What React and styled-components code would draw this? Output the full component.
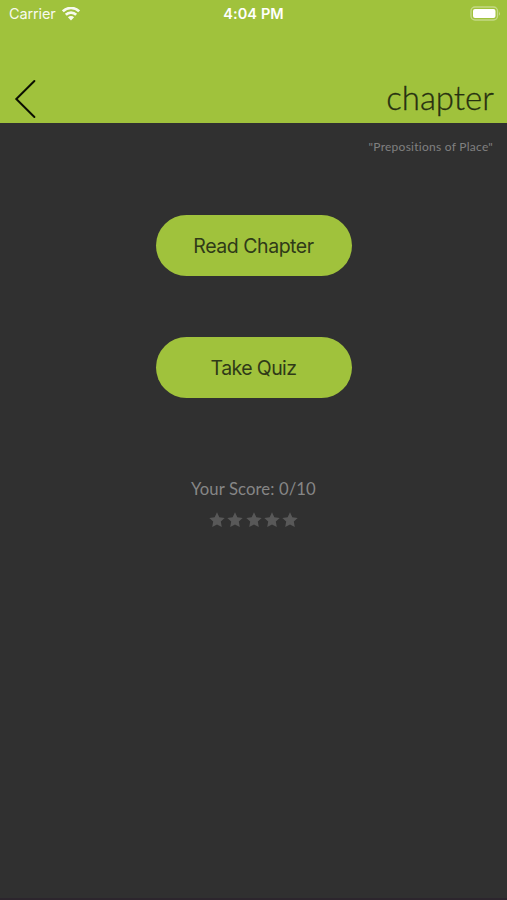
import React from 'react'
import styled, { createGlobalStyle } from 'styled-components'

const GlobalStyle = createGlobalStyle`
    * {
        box-sizing: border-box;
    }
    body {
        margin: 0;
        background: #303030;
    }
`;

function StatusBar() {
    return (
        <StatusBarStyled>
            <div className='carrier'>
                <span>Carrier</span>
                <svg width='18' height='14' viewBox='0 0 18 14' fill='none' stroke='#fff' strokeWidth='2.7'>
                    <path d='M0.8 4.4 A11.6 11.6 0 0 1 17.2 4.4' />
                    <path d='M3.8 7.8 A7.4 7.4 0 0 1 14.2 7.8' />
                    <path d='M9 13.4 L5.9 10.3 A4.4 4.4 0 0 1 12.1 10.3 Z' fill='#fff' stroke='none' />
                </svg>
            </div>
            <time>4:04 PM</time>
            <svg className='battery' width='31' height='15' viewBox='0 0 31 15'>
                <rect x='1' y='1' width='26.5' height='13' rx='4' fill='none' stroke='#fff' strokeOpacity='0.38' strokeWidth='1.4' />
                <rect x='3' y='3' width='22.5' height='9' rx='2' fill='#fff' />
                <path d='M29 5.2 Q30.7 7.5 29 9.8 Z' fill='#fff' fillOpacity='0.45' />
            </svg>
        </StatusBarStyled>
    )
}

function App() {
    return (
        <>
            <GlobalStyle />
            <Screen>
                <Header>
                    <StatusBar />
                    <NavRow>
                        <BackButton aria-label='Back'>
                            <svg width='22' height='40' viewBox='0 0 22 40' fill='none' stroke='#0c1002' strokeWidth='2'>
                                <path d='M20.4 2 L2.3 20 L20.4 38' strokeLinecap='round' />
                            </svg>
                        </BackButton>
                        <Title>chapter</Title>
                    </NavRow>
                </Header>
                <Subtitle>"Prepositions of Place"</Subtitle>
                <Actions>
                    <ActionButton $spacing='-0.45px'>Read Chapter</ActionButton>
                    <ActionButton $spacing='-0.6px'>Take Quiz</ActionButton>
                </Actions>
                <Score>Your Score: 0/10</Score>
                <Stars>
                    {[1, 2, 3, 4, 5].map(star => (
                        <svg key={star} width='16' height='16' viewBox='0 0 16 16' fill='#585858'>
                            <path d='M8 0.3 L10.3 5.2 L15.7 5.9 L11.8 9.6 L12.8 15 L8 12.4 L3.2 15 L4.2 9.6 L0.3 5.9 L5.7 5.2 Z' />
                        </svg>
                    ))}
                </Stars>
            </Screen>
        </>
    )
}

const Screen = styled.main`
    display: flex;
    flex-direction: column;
    width: 507px;
    height: 900px;
    overflow: hidden;
    background: #303030;
    border-bottom: 2px solid #2c252d;
    font-family: Lato, sans-serif;
    font-variant-ligatures: none;
`;

const Header = styled.header`
    height: 123px;
    flex-shrink: 0;
    background: #a0c23c;
`;

const StatusBarStyled = styled.div`
    display: grid;
    grid-template-columns: 1fr auto 1fr;
    align-items: center;
    height: 27px;
    padding: 0 6px 0 9px;
    color: #fff;
    font-family: Inter, sans-serif;
    font-size: 14.5px;
    .carrier {
        display: flex;
        align-items: center;
        gap: 6px;
        opacity: 0.92;
        letter-spacing: -0.12px;
    }
    time {
        margin-right: 3px;
        font-weight: 600;
        letter-spacing: 0.12px;
    }
    .battery {
        justify-self: end;
    }
`;

const NavRow = styled.div`
    display: flex;
    justify-content: space-between;
    align-items: center;
    height: 96px;
    padding: 47px 13px 0 14px;
`;

const BackButton = styled.button`
    display: flex;
    padding: 0;
    border: 0;
    background: none;
`;

const Title = styled.h1`
    margin: -3px 0 0;
    color: #263010;
    font-size: 33px;
    font-weight: 300;
    line-height: 40px;
    -webkit-text-stroke: 0.3px #263010;
`;

const Subtitle = styled.p`
    margin: 15px 14px 0 0;
    color: #808080;
    font-size: 12px;
    line-height: 18px;
    letter-spacing: 0.26px;
    text-align: right;
`;

const Actions = styled.div`
    display: flex;
    flex-direction: column;
    align-items: center;
    gap: 61px;
    margin-top: 58.5px;
`;

const ActionButton = styled.button`
    width: 196px;
    height: 61px;
    padding: 1px 0 0;
    border: 0;
    border-radius: 31px;
    background: #a0c23c;
    color: #2f3a18;
    font-family: Inter, sans-serif;
    font-size: 19.5px;
    letter-spacing: ${props => props.$spacing};
`;

const Score = styled.p`
    margin: 79px 0 0;
    color: #868686;
    font-size: 16.7px;
    line-height: 24px;
    letter-spacing: 0.1px;
    text-align: center;
`;

const Stars = styled.div`
    display: flex;
    justify-content: center;
    gap: 2.4px;
    margin-top: 11px;
`;

export default App
